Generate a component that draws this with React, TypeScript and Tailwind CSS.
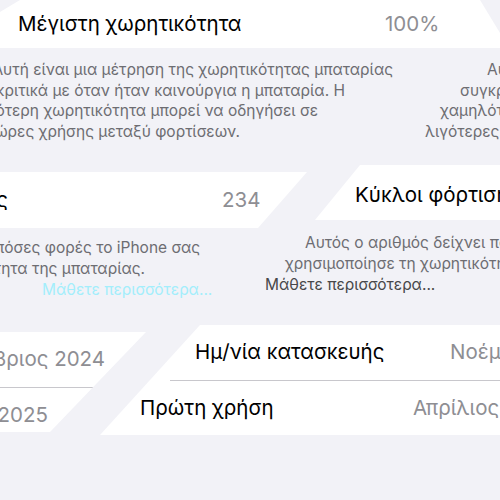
import React from 'react';

// each footnote line wraps around the screen edge: tail ends at `end`, head restarts at `start`
const capacityNote = [
    { text: 'Αυτή είναι μια μέτρηση της χωρητικότητας μπαταρίας', end: 'w-[393px]', gap: 'ml-[94px]' },
    { text: 'συγκριτικά με όταν ήταν καινούργια η μπαταρία. Η', end: 'w-[345px]', gap: 'ml-[115px]' },
    { text: 'χαμηλότερη χωρητικότητα μπορεί να οδηγήσει σε', end: 'w-[318px]', gap: 'ml-[122px]' },
    { text: 'λιγότερες ώρες χρήσης μεταξύ φορτίσεων.', end: 'w-[240px]', gap: 'ml-[185px]' },
];

const cycleLine1 = 'Αυτός ο αριθμός δείχνει πόσες φορές το iPhone σας';
const cycleLine2 = 'χρησιμοποίησε τη χωρητικότητα της μπαταρίας.';

export default function App() {
    return (
        <div className="w-[500px] h-[500px] overflow-hidden bg-[#f2f2f7] font-['Inter','Noto_Sans',sans-serif] text-black">
            {/* Μέγιστη χωρητικότητα */}
            <div className="h-[48px] bg-white flex items-center [clip-path:polygon(0_12px,20px_0,480px_0,100%_33px,100%_100%,0_100%)]">
                <div className="w-[385px] shrink-0 pl-[18px] text-[20.5px] whitespace-nowrap">Μέγιστη χωρητικότητα</div>
                <div className="text-[20.5px] text-[#8e8e93]">100%</div>
            </div>

            <div className="mt-[12px] flex flex-col text-[15.5px] leading-[20.5px] text-[#6d6d72]">
                {capacityNote.map((line) => (
                    <div key={line.text} className="flex overflow-hidden">
                        <div className={`${line.end} shrink-0 flex justify-end`}>
                            <span className="shrink-0 whitespace-nowrap">{line.text}</span>
                        </div>
                        <span className={`${line.gap} shrink-0 whitespace-nowrap`}>{line.text}</span>
                    </div>
                ))}
            </div>

            {/* Κύκλοι φόρτισης */}
            <div className="grid">
                <div className="col-start-1 row-start-1 mt-[30px] h-[56px] bg-white flex items-center overflow-hidden [clip-path:polygon(0_0,307px_0,258px_100%,0_100%)]">
                    <div className="w-[8px] shrink-0 flex justify-end">
                        <span className="shrink-0 whitespace-nowrap text-[20.5px]">Κύκλοι φόρτισης</span>
                    </div>
                    <span className="ml-[214px] shrink-0 text-[20.5px] text-[#8e8e93]">234</span>
                </div>
                <div className="col-start-1 row-start-1 mt-[23px] ml-[315px] h-[55px] pt-[6px] bg-white flex items-center overflow-hidden [clip-path:polygon(45px_0,100%_0,100%_100%,0_100%)]">
                    <span className="ml-[40px] shrink-0 whitespace-nowrap text-[20.5px]">Κύκλοι φόρτισης</span>
                </div>
            </div>

            <div className="grid text-[15.5px] leading-[21px] text-[#6d6d72]">
                <div className="col-start-1 row-start-1 mt-[4px] flex flex-col overflow-hidden">
                    <span className="ml-[305px] whitespace-nowrap">{cycleLine1}</span>
                    <span className="ml-[285px] whitespace-nowrap">{cycleLine2}</span>
                    <span className="ml-[265px] whitespace-nowrap text-[#48484a]">Μάθετε περισσότερα...</span>
                </div>
                <div className="col-start-1 row-start-1 mt-[9px] flex flex-col overflow-hidden">
                    <div className="w-[200px] flex justify-end">
                        <span className="shrink-0 whitespace-nowrap">{cycleLine1}</span>
                    </div>
                    <div className="w-[145px] flex justify-end">
                        <span className="shrink-0 whitespace-nowrap">{cycleLine2}</span>
                    </div>
                    <span className="ml-[42px] whitespace-nowrap text-[#a3eefc]">Μάθετε περισσότερα...</span>
                </div>
            </div>

            {/* Ημ/νία κατασκευής + Πρώτη χρήση */}
            <div className="grid text-[20.5px]">
                <div className="col-start-1 row-start-1 mt-[32px] h-[100px] bg-white flex flex-col overflow-hidden [clip-path:polygon(0_0,146px_0,50px_100%,0_100%)]">
                    <div className="h-[55px] flex items-center">
                        <div className="w-[105px] shrink-0 flex justify-end">
                            <span className="shrink-0 whitespace-nowrap text-[#8e8e93]">Νοέμβριος 2024</span>
                        </div>
                    </div>
                    <div className="h-px w-[145px] bg-[#c8c7cc]" />
                    <div className="h-[44px] pt-[10px] flex items-center">
                        <div className="w-[48px] shrink-0 flex justify-end">
                            <span className="shrink-0 whitespace-nowrap text-[#8e8e93]">Απρίλιος 2025</span>
                        </div>
                    </div>
                </div>
                <div className="col-start-1 row-start-1 mt-[25px] ml-[100px] h-[110px] bg-white flex flex-col overflow-hidden [clip-path:polygon(100px_0,100%_0,100%_100%,0_100%)]">
                    <div className="h-[55px] flex items-center">
                        <span className="ml-[95px] w-[255px] shrink-0 whitespace-nowrap">Ημ/νία κατασκευής</span>
                        <span className="shrink-0 whitespace-nowrap text-[#8e8e93]">Νοέμβριος 2024</span>
                    </div>
                    <div className="ml-[70px] h-px bg-[#c8c7cc]" />
                    <div className="h-[54px] flex items-center">
                        <span className="ml-[40px] w-[273px] shrink-0 whitespace-nowrap">Πρώτη χρήση</span>
                        <span className="shrink-0 whitespace-nowrap text-[#8e8e93]">Απρίλιος 2025</span>
                    </div>
                </div>
            </div>
        </div>
    );
}
